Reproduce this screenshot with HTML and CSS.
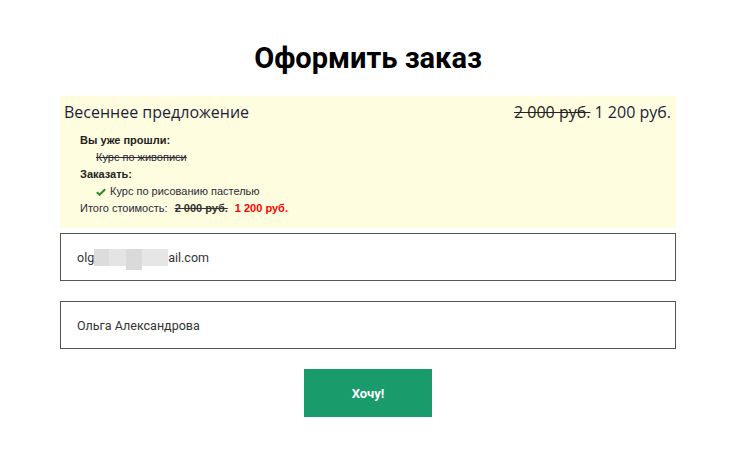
FILE: index.html
```html
<!DOCTYPE html>
<html lang="ru">
<head>
<meta charset="utf-8">
<link rel="stylesheet" href="styles.css">
</head>
<body>
<div class="page">
  <h1 class="title">Оформить заказ</h1>
  <div class="offer">
    <div class="offer-head">
      <span class="offer-name">Весеннее предложение</span>
      <span class="offer-price"><s>2 000 руб.</s> 1 200 руб.</span>
    </div>
    <div class="offer-details">
      <div class="label">Вы уже прошли:</div>
      <div class="item"><s>Курс по живописи</s></div>
      <div class="label">Заказать:</div>
      <div class="item"><svg class="check" viewBox="0 0 10 8" width="10" height="8"><path d="M0.8 4.2 L3.6 6.8 L9.2 1.2" fill="none" stroke="#2e8b2e" stroke-width="2"/></svg>Курс по рисованию пастелью</div>
      <div class="total">Итого стоимость: <s class="old">2 000 руб.</s> <span class="new">1 200 руб.</span></div>
    </div>
  </div>
  <div class="field">olg<span class="blur"><span class="b1"></span><span class="b2"></span><span class="b3"></span><span class="b4"></span></span>ail.com</div>
  <div class="field">Ольга Александрова</div>
  <div class="actions"><button class="btn">Хочу!</button></div>
</div>
</body>
</html>
```
FILE: styles.css
```css
html, body { margin: 0; padding: 0; background: #fff; }
body { font-family: "Open Sans", "Liberation Sans", sans-serif; color: #222; }
.page { width: 616px; margin-left: 60px; padding-top: 36px; }
.title {
  font-family: Roboto, "Liberation Sans", sans-serif;
  font-weight: 700; font-size: 29px; line-height: 44px;
  text-align: center; margin: 0 0 16px; color: #000;
}
.offer { background: #fffddf; padding: 4px 5px 11px 4px; }
.offer-head { display: flex; justify-content: space-between; align-items: center; height: 24px; font-size: 16px; color: #1e1e3c; }
.offer-price s { color: #222; }
.offer-details { padding-left: 16px; padding-top: 8px; font-family: "Liberation Sans", Arial, sans-serif; font-size: 11px; line-height: 17px; }
.label { font-weight: 700; color: #222; }
.item { padding-left: 16px; color: #2a2a3a; display: flex; align-items: center; }
.check { margin-right: 4px; }
.total { color: #2a2a3a; }
.old { font-weight: 700; color: #333; margin-left: 4px; margin-right: 4px; }
.new { font-weight: 700; color: #f00; }
.field {
  margin-top: 5px; height: 46px; border: 1px solid #555;
  font-family: Roboto, "Liberation Sans", sans-serif; font-size: 12.5px; color: #333;
  display: flex; align-items: center; padding-left: 16px;
}
.field + .field { margin-top: 20px; }
.blur { display: inline-flex; height: 17px; align-items: flex-start; }
.blur span { display: block; height: 17px; }
.b1 { width: 15px; background: #dcdcdc; }
.b2 { width: 17px; background: #e4e4e4; }
.b3 { width: 16px; height: 21px !important; background: #dadada; }
.b4 { width: 26px; background: #e6e6e6; }
.actions { display: flex; justify-content: center; padding-top: 20px; }
.btn {
  width: 128px; height: 48px; border: 0; background: #1a9b6b; color: #fff;
  font-family: Roboto, "Liberation Sans", sans-serif; font-weight: 700; font-size: 13px;
}
```
